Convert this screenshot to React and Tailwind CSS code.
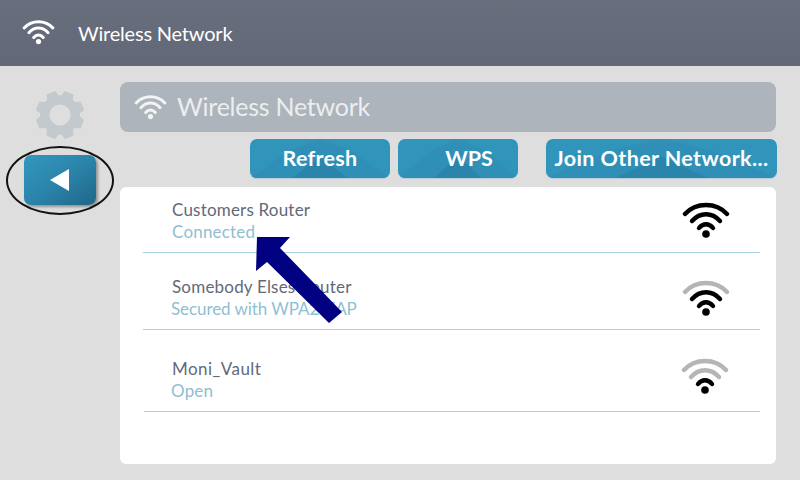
import React from 'react';

const networks = [
  { name: 'Customers Router', status: 'Connected', bars: 3, rowClass: 'h-[66px] pt-[12px] mr-[16px] ml-[23px] pl-[29px]', iconClass: 'mr-[30px] mt-[2px]', nameClass: 'tracking-[0.2px]', statusClass: 'tracking-[0.2px]' },
  { name: 'Somebody Elses Router', status: 'Secured with WPA2-EAP', bars: 2, rowClass: 'h-[77px] pt-[23px] mr-[16px] ml-[23px] pl-[29px]', iconClass: 'mr-[30px] mt-[3px]', nameClass: 'tracking-[0.2px]', statusClass: 'tracking-[-0.08px] ml-[-1px]' },
  { name: 'Moni_Vault', status: 'Open', bars: 1, rowClass: 'h-[82px] pt-[28px] ml-[24px] mr-[16px] pl-[28px]', iconClass: 'mr-[31px] mt-[-1px]', nameClass: 'tracking-[0.45px]', statusClass: 'tracking-[0.2px] ml-[-1px]' },
];

const WifiIcon = ({ bars = 3, className = '', on = '#000', off = '#b5b5b5' }) => (
  <svg viewBox="0 0 48 38" className={className} fill="none" strokeLinecap="round" strokeWidth="4.4">
    <path d="M3 13 C14 1 34 1 45 13" stroke={bars >= 3 ? on : off} />
    <path d="M10 20 C18 11 30 11 38 20" stroke={bars >= 2 ? on : off} />
    <path d="M17 27 C21 22 27 22 31 27" stroke={on} />
    <circle cx="24" cy="33" r="3.8" fill={on} />
  </svg>
);

// 8 rounded teeth around a centre hole
const gearPath = () => {
  const pts = [];
  for (let i = 0; i < 8; i++) {
    const a = (i * Math.PI) / 4 + Math.PI / 8;
    [[-0.27, 19], [-0.17, 23.5], [0.17, 23.5], [0.27, 19]].forEach(([d, r]) => {
      pts.push(`${(25 + r * Math.cos(a + d)).toFixed(2)} ${(25 + r * Math.sin(a + d)).toFixed(2)}`);
    });
  }
  return `M${pts.join(' L')} Z`;
};

const Gear = () => (
  <svg viewBox="0 0 50 50" className="w-[50px] h-[50px]">
    <path d={gearPath()} fill="#c3cacd" stroke="#c3cacd" strokeWidth="2" strokeLinejoin="round" />
    <circle cx="25" cy="25" r="10.5" fill="#dedede" />
  </svg>
);

const ActionButton = ({ className, children }) => (
  <button className={`relative overflow-hidden h-[40px] rounded-[7px] bg-[#3195bb] border-b border-[#b8cdd6] text-white font-bold text-[21.5px] leading-none flex items-center justify-center ${className}`}>
    <svg viewBox="0 0 100 40" preserveAspectRatio="none" className="absolute inset-0 w-full h-full">
      <path d="M0 40 L28 12 L50 0 L72 12 L100 40 Z" fill="#2f8ab2" opacity="0.55" />
      <path d="M30 40 L50 18 L70 40 Z" fill="#2b82a9" opacity="0.8" />
    </svg>
    <span className="relative">{children}</span>
  </button>
);

export default function App() {
  return (
    <div className="w-[800px] h-[480px] overflow-hidden relative bg-[#dedede] font-['Lato','Carlito',sans-serif]">
      {/* Top bar */}
      <div className="h-[66px] bg-gradient-to-b from-[#686e7c] to-[#626877] flex items-center pl-[22px] text-white">
        <WifiIcon bars={3} on="#fff" className="w-[33px] h-[26px] mt-[-2px]" />
        <span className="ml-[23px] text-[20px] tracking-[-0.2px] mt-[-1px]">Wireless Network</span>
      </div>

      <div className="flex">
        {/* Left column */}
        <div className="w-[120px] flex flex-col items-center">
          <div className="mt-[24px]"><Gear /></div>
          <div className="relative mt-[15px]">
            <button className="w-[72px] h-[50px] rounded-[7px] bg-gradient-to-br from-[#3398bf] via-[#2b84aa] to-[#1f6788] shadow-[2px_2px_3px_rgba(0,0,0,0.35)] flex items-center justify-center">
              <svg viewBox="0 0 20 22" className="w-[20px] h-[22px]">
                <path d="M0 11 L19 0 L19 22 Z" fill="#fff" />
              </svg>
            </button>
            <div className="absolute left-[-18px] top-[-9px] w-[108px] h-[69px] rounded-[50%] border-2 border-[#111]" />
          </div>
        </div>

        {/* Main column */}
        <div className="w-[656px] pt-[16px]">
          <div className="h-[50px] rounded-[8px] bg-[#adb4bb] flex items-center pl-[14px] text-[#eceef0]">
            <WifiIcon bars={3} on="#f2f3f4" className="w-[33px] h-[26px]" />
            <span className="ml-[10px] text-[25px] tracking-[-0.25px] mt-[-1px]">Wireless Network</span>
          </div>

          <div className="flex justify-end mt-[7px] mr-[-1px] gap-[8px]">
            <ActionButton className="w-[140px] tracking-[0.3px]">Refresh</ActionButton>
            <ActionButton className="w-[120px] pl-[22px]">WPS</ActionButton>
            <ActionButton className="w-[231px] ml-[20px] tracking-[0.4px]">Join Other Network...</ActionButton>
          </div>

          <div className="mt-[8px] h-[277px] rounded-[6px] bg-white">
            {networks.map((n) => (
              <div key={n.name} className={`border-b border-[#a9d3e2] flex justify-between items-start ${n.rowClass}`}>
                <div>
                  <div className={`text-[17px] leading-[22px] text-[#636978] ${n.nameClass}`}>{n.name}</div>
                  <div className={`text-[17px] leading-[22px] text-[#8fbfd3] ${n.statusClass}`}>{n.status}</div>
                </div>
                <WifiIcon bars={n.bars} className={`w-[48px] h-[38px] ${n.iconClass}`} />
              </div>
            ))}
          </div>
        </div>
      </div>

      {/* Annotation arrow */}
      <svg viewBox="0 0 90 90" className="absolute left-[255px] top-[236px] w-[90px] h-[90px]">
        <path d="M2 1 L35 1 L25 12 L87 76 L74 87 L12 26 L1 35 Z" fill="#010080" />
      </svg>
    </div>
  );
}
